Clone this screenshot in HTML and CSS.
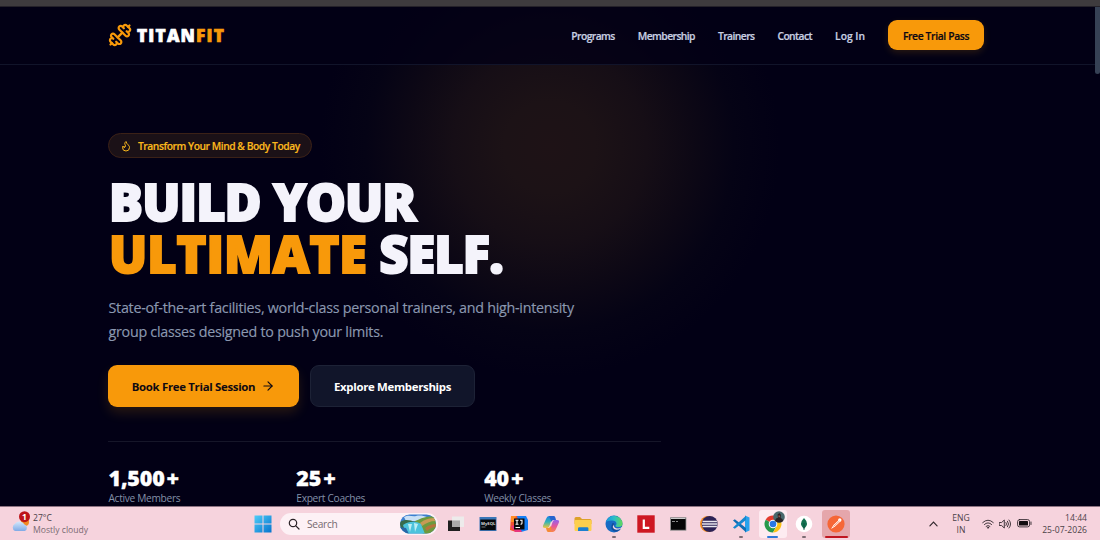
FILE: index.html
```html
<!DOCTYPE html>
<html lang="en">
<head>
    <meta charset="UTF-8">
    <meta name="viewport" content="width=device-width, initial-scale=1.0">
    <title>TitanFit</title>
    <link rel="stylesheet" href="styles.css">
</head>
<body>
    <div class="top-strip"></div>

    <div class="page">
        <div class="glow"></div>
        <div class="scrollbar"></div>

        <header class="header">
            <div class="logo">
                <svg class="logo-icon" viewBox="0 0 24 24">
                    <g transform="rotate(90 12 12)">
                        <path d="M14.4 14.4 9.6 9.6"/>
                        <path d="M18.657 21.485a2 2 0 1 1-2.829-2.828l-1.767 1.768a2 2 0 1 1-2.829-2.829l6.364-6.364a2 2 0 1 1 2.829 2.829l-1.768 1.767a2 2 0 1 1 2.828 2.829z"/>
                        <path d="m21.5 21.5-1.4-1.4"/>
                        <path d="M3.9 3.9 2.5 2.5"/>
                        <path d="M6.404 12.768a2 2 0 1 1-2.829-2.829l1.768-1.767a2 2 0 1 1-2.828-2.829l2.828-2.828a2 2 0 1 1 2.829 2.828l1.767-1.768a2 2 0 1 1 2.829 2.829z"/>
                    </g>
                </svg>
                <span class="logo-text">TITAN<span class="accent">FIT</span></span>
            </div>
            <nav class="nav">
                <a class="nav-link">Programs</a>
                <a class="nav-link">Membership</a>
                <a class="nav-link">Trainers</a>
                <a class="nav-link">Contact</a>
                <a class="nav-link nav-login">Log In</a>
                <a class="btn-pass">Free Trial Pass</a>
            </nav>
        </header>

        <main class="hero">
            <div class="badge">
                <svg class="badge-icon" viewBox="0 0 24 24">
                    <path d="M8.5 14.5A2.5 2.5 0 0 0 11 12c0-1.38-.5-2-1-3-1.072-2.143-.224-4.054 2-6 .5 2.5 2 4.9 4 6.5 2 1.6 3 3.5 3 5.5a7 7 0 1 1-14 0c0-1.153.433-2.294 1-3a2.5 2.5 0 0 0 2.5 2.5z"/>
                </svg>
                <span>Transform Your Mind &amp; Body Today</span>
            </div>

            <h1 class="title">
                <span class="line">BUILD YOUR</span>
                <span class="line"><span class="accent ultimate">ULTIMATE</span> SELF.</span>
            </h1>

            <p class="subtitle">State-of-the-art facilities, world-class personal trainers, and high-intensity<br>group classes designed to push your limits.</p>

            <div class="actions">
                <a class="btn btn-primary">
                    <span>Book Free Trial Session</span>
                    <svg class="arrow" viewBox="0 0 24 24"><path d="M5 12h14"/><path d="m12 5 7 7-7 7"/></svg>
                </a>
                <a class="btn btn-secondary">Explore Memberships</a>
            </div>

            <div class="stats">
                <div class="stat">
                    <div class="stat-value">1,500<span class="plus">+</span></div>
                    <div class="stat-label">Active Members</div>
                </div>
                <div class="stat">
                    <div class="stat-value">25<span class="plus">+</span></div>
                    <div class="stat-label">Expert Coaches</div>
                </div>
                <div class="stat">
                    <div class="stat-value">40<span class="plus">+</span></div>
                    <div class="stat-label">Weekly Classes</div>
                </div>
            </div>
        </main>
    </div>

    <footer class="taskbar">
        <div class="weather">
            <svg class="weather-icon" viewBox="0 0 20 22">
                <defs>
                    <linearGradient id="cloud" x1="0" y1="0" x2="0" y2="1">
                        <stop offset="0" stop-color="#d5e8fb"/>
                        <stop offset="1" stop-color="#7faae6"/>
                    </linearGradient>
                </defs>
                <circle cx="14" cy="11" r="4" fill="#f08a24"/>
                <path d="M4 20a4 4 0 0 1 0-7.200a5.500 5.500 0 0 1 9.500 0.800a3.400 3.400 0 0 1 .3 6.400z" fill="url(#cloud)"/>
                <circle cx="13.500" cy="5.700" r="5.500" fill="#bd1318"/>
                <text x="13.500" y="8.700" class="weather-count">1</text>
            </svg>
            <div class="weather-text">
                <div class="temp">27°C</div>
                <div class="condition">Mostly cloudy</div>
            </div>
        </div>

        <div class="apps">
            <div class="app start">
                <svg viewBox="0 0 18 18">
                    <defs>
                        <linearGradient id="win" x1="0" y1="0" x2="1" y2="1">
                            <stop offset="0" stop-color="#4fcdf8"/>
                            <stop offset="1" stop-color="#0573cd"/>
                        </linearGradient>
                    </defs>
                    <path d="M.5.5h8v8h-8zM9.500.5h8v8h-8zM.5 9.500h8v8h-8zM9.500 9.500h8v8h-8z" fill="url(#win)"/>
                </svg>
            </div>

            <div class="search">
                <svg class="search-icon" viewBox="0 0 12 12"><circle cx="5" cy="5" r="3.700"/><path d="m7.800 7.800 3.200 3.200"/></svg>
                <span class="search-label">Search</span>
                <svg class="search-art" viewBox="0 0 36 20">
                    <defs>
                        <clipPath id="pill"><rect width="36" height="19" y=".5" rx="9.500"/></clipPath>
                    </defs>
                    <g clip-path="url(#pill)">
                        <rect width="36" height="20" fill="#3c7fd0"/>
                        <path d="M4 3c5-3 8 0 12-1s8 0 11 1l-5 4H6z" fill="#c9e0f5"/>
                        <path d="M0 8c5-3 10-2 15 0l-2 5-13 2z" fill="#386b4c"/>
                        <path d="M14 8c6-4 14-6 22-6v18H23z" fill="#6c9a3e"/>
                        <path d="M20 9c5-4 10-5 16-5v3c-6 0-10 2-14 5z" fill="#c79a55"/>
                        <path d="M25 14c4-3 7-4 11-4v3c-4 0-7 2-9 4z" fill="#b5733c"/>
                        <path d="M3 11c6-4 13-4 18-1l4 10H6z" fill="#4cc3dc"/>
                        <path d="M8 10l2 8 2-8zM14 9l1 9 3-8z" fill="#bdeef3"/>
                        <path d="M0 13l6 1 3 6H0z" fill="#2867a7"/>
                    </g>
                </svg>
            </div>

            <div class="app">
                <svg viewBox="0 0 18 18">
                    <rect x="1" y="5.500" width="12" height="10.500" fill="#1f1f1f"/>
                    <rect x="5" y="1.500" width="12" height="10.500" fill="#ececec" opacity=".94"/>
                    <path d="M5 5.500h8V12H5z" fill="#aaa"/>
                </svg>
            </div>
            <div class="app">
                <svg viewBox="0 0 18 18">
                    <rect x=".5" y="2" width="17" height="14" fill="#3b77b8"/>
                    <rect x="1.300" y="4.500" width="15.400" height="10.600" fill="#05080c"/>
                    <text x="2" y="9.700" class="tiny-text">MySQL</text>
                    <path d="M2.500 12h4" stroke="#777"/>
                </svg>
            </div>
            <div class="app">
                <svg viewBox="0 0 18 18">
                    <path d="M1 1h8l2 8-5 8-6-2z" fill="#f3532f"/>
                    <path d="M7 1l9 0 2 4v10l-7 2z" fill="#147ef5"/>
                    <path d="M1 11l7-2 4 8H5z" fill="#e8357d"/>
                    <path d="M1 1h5l-2 6H1z" fill="#ff8d25"/>
                    <rect x="4" y="3.500" width="10.500" height="11" fill="#090909"/>
                    <path d="M5.500 5.300h3M7 5.300v4M5.500 9.300h3M10 5.300h2v3q0 1-1.500 1M5.500 12.500h4.500" fill="none" stroke="#fff" stroke-width="1.100"/>
                </svg>
            </div>
            <div class="app">
                <svg viewBox="0 0 18 18">
                    <defs>
                        <linearGradient id="copilot-a" x1="0" y1="0" x2="0" y2="1">
                            <stop offset="0" stop-color="#1680e3"/>
                            <stop offset=".5" stop-color="#33b4b6"/>
                            <stop offset="1" stop-color="#f3c33b"/>
                        </linearGradient>
                        <linearGradient id="copilot-b" x1="0" y1="0" x2="0" y2="1">
                            <stop offset="0" stop-color="#9161f0"/>
                            <stop offset=".5" stop-color="#e4569c"/>
                            <stop offset="1" stop-color="#fa8848"/>
                        </linearGradient>
                    </defs>
                    <path d="M12 1H7Q5 1 4 4L1.300 10Q0 13 3 13h2.500q1.500 0 2.300-3l1.600-5q.8-2 2.600-1z" fill="url(#copilot-a)"/>
                    <path d="M6 17h5q2 0 3-3l2.700-6Q18 5 15 5h-2.500q-1.500 0-2.300 3l-1.600 5Q7.800 15 6 14z" fill="url(#copilot-b)"/>
                    <path d="M7 1h5q1.200 0 2 4h-2.500q-1.600 0-2 2z" fill="#2763ce"/>
                    <path d="M4 13h2.500q1.500 0 2-2l1.200 2-1.500 4H6q-1.200 0-2-4z" fill="#f58b36"/>
                </svg>
            </div>
            <div class="app">
                <svg viewBox="0 0 18 18">
                    <path d="M.5 3.500q0-1.500 1.500-1.500h4l2 2h8q1.500 0 1.500 1.500V9H.5z" fill="#dda12a"/>
                    <rect x=".5" y="5" width="17" height="11" rx="1.200" fill="#fdcf4c"/>
                    <path d="M4 16v-2.500q0-1.200 1.200-1.200h8q1.200 0 1.200 1.200V16z" fill="#1b7fd0"/>
                </svg>
            </div>
            <div class="app running">
                <svg viewBox="0 0 18 18">
                    <defs>
                        <linearGradient id="edge" x1="0" y1="0" x2="1" y2="0">
                            <stop offset="0" stop-color="#1993dc"/>
                            <stop offset=".5" stop-color="#2bbdc9"/>
                            <stop offset="1" stop-color="#62d957"/>
                        </linearGradient>
                    </defs>
                    <circle cx="9" cy="9" r="8.500" fill="#176bc4"/>
                    <path d="M.6 8A8.500 8.500 0 0 1 17.500 8.500q0 3.500-4 3.500-3 0-3-1.500 1-.7 1-2Q11 5.500 7 5.500.6 5.500.6 8z" fill="url(#edge)"/>
                    <path d="M7.500 8q-3 5 1 8 3 1.500 6.500-1-5 1-6-3-.3-2 .5-3 0-1-2-1z" fill="#124d9b"/>
                    <path d="M8.700 9.500q0 4 4.200 4 2 0 4-1.500l1.100 3H17l-1-1.500q-7 3-8.300-1.500z" fill="#f4d6df"/>
                </svg>
            </div>
            <div class="app">
                <svg viewBox="0 0 18 18">
                    <rect x=".3" y=".3" width="17.400" height="17.400" fill="#ce1722"/>
                    <path d="M6.800 4.500v8.300h5.500" fill="none" stroke="#fff" stroke-width="2.200"/>
                </svg>
            </div>
            <div class="app">
                <svg viewBox="0 0 18 18">
                    <rect x="1.500" y="2.700" width="15.500" height="12.500" fill="#060606" stroke="#999" stroke-width=".8"/>
                    <path d="M2 3.500h14.500" stroke="#ccc"/>
                    <path d="M3 6.500h3M7 6.500h2" stroke="#aaa" stroke-width=".8"/>
                </svg>
            </div>
            <div class="app">
                <svg viewBox="0 0 18 18">
                    <circle cx="8" cy="9" r="8" fill="#f28c20"/>
                    <circle cx="9.700" cy="9" r="8" fill="#2c2255"/>
                    <path d="M2.500 6.500h14.400M2 9h15.400M2.500 11.500h14.400" stroke="#e9e7ee" stroke-width="1.300"/>
                </svg>
            </div>
            <div class="app running">
                <svg viewBox="0 0 18 18">
                    <path d="M13 .5 17.500 2.500v13L13 17.500z" fill="#27a2ec"/>
                    <path d="M1 5.500 2.800 4.300 14 13v4.200z" fill="#0e6db4"/>
                    <path d="M1 12.500 2.800 13.700 14 5V.8z" fill="#1688cf"/>
                </svg>
            </div>
            <div class="app chrome">
                <svg viewBox="0 0 18 18">
                    <path d="M9 9 1.700 4.700A8.500 8.500 0 0 1 16.500 5z" fill="#e33b2e"/>
                    <path d="M9 9 1.700 4.700A8.500 8.500 0 0 0 9 17.500L12.500 11z" fill="#27994b"/>
                    <path d="M9 5h7.500A8.500 8.500 0 0 1 9 17.500L12.800 11z" fill="#fbc116"/>
                    <circle cx="9" cy="9" r="4.300" fill="#fff"/>
                    <circle cx="9" cy="9" r="3.300" fill="#2878e5"/>
                </svg>
                <svg class="avatar" viewBox="0 0 12 12">
                    <circle cx="6" cy="6" r="5.800" fill="#48686c"/>
                    <path d="M2 10q.5-3 3-3.200L4.500 3.500 6.500 2 8 4l-.3 3q2 .5 2.500 3-4 3-8.200 0z" fill="#292326"/>
                    <path d="M5.300 4.500h1.800v1.700H5.500z" fill="#8d594d"/>
                </svg>
            </div>
            <div class="app running">
                <svg viewBox="0 0 18 18">
                    <circle cx="9" cy="9" r="8.300" fill="#fff"/>
                    <path d="M9 3q6 6 0 11Q3 9 9 3z" fill="#137150"/>
                    <path d="M9 8v7" stroke="#0a4c3d" stroke-width=".8"/>
                </svg>
            </div>
            <div class="app postman">
                <svg viewBox="0 0 18 18">
                    <circle cx="9" cy="9" r="8.600" fill="#f66636"/>
                    <path d="M4 14l2.500-4L12 4.800l1.600 1.500L8 11.500z" fill="#fff"/>
                    <circle cx="12.800" cy="5" r="1.700" fill="#fff"/>
                    <path d="m6.500 11.500 6-5.500" stroke="#f66636" stroke-width=".7"/>
                </svg>
            </div>
        </div>

        <div class="tray">
            <svg class="chevron" viewBox="0 0 10 6"><path d="m1 5 4-4 4 4"/></svg>
            <div class="lang">ENG<br>IN</div>
            <svg class="wifi" viewBox="0 0 12 10">
                <path d="M.7 3.600q5.300-5 10.600 0M2.400 5.500q3.600-3.400 7.200 0M4.100 7.300q1.900-1.700 3.800 0"/>
                <circle cx="6" cy="8.700" r=".6"/>
            </svg>
            <svg class="volume" viewBox="0 0 12 10">
                <path d="M.6 3.500h2L5.300 1v8L2.600 6.500h-2zM7 3.500q1.200 1.500 0 3M8.500 2.200q2.300 2.800 0 5.600M10 1q3.300 4 0 8"/>
            </svg>
            <svg class="battery" viewBox="0 0 15 9">
                <rect x=".6" y=".6" width="12" height="7.300" rx="2"/>
                <rect class="charge" x="2" y="2" width="9" height="4.500" rx=".6"/>
                <path d="M14 3v2.500"/>
            </svg>
            <div class="clock">14:44<br><span>25-07-2026</span></div>
        </div>
    </footer>
</body>
</html>
```

FILE: styles.css
```css
* {
    box-sizing: border-box;
}
body {
    margin: 0;
    width: 1100px;
    height: 540px;
    overflow: hidden;
    background: #020015;
    font-family: 'Open Sans', 'Noto Sans', sans-serif;
    color: #f4f3fb;
}
svg {
    display: block;
    flex: none;
}
.accent {
    color: #f8990a;
}
.top-strip {
    height: 7px;
    background: #3e3b3e;
    border-bottom: 1px solid #242129;
}

/* page */
.page {
    position: relative;
    height: 499px;
    overflow: hidden;
}
.glow {
    position: absolute;
    left: 320px;
    top: -90px;
    width: 460px;
    height: 460px;
    background: radial-gradient(closest-side, #1e1216 0%, #1c1216 20%, #160e16 42%, #0d0815 62%, #050315 80%, rgba(2, 0, 21, 0) 100%);
}
.scrollbar {
    position: absolute;
    right: 0;
    top: 0;
    width: 5px;
    height: 67px;
    background: #364155;
    border-radius: 0 0 3px 3px;
}
.header {
    position: relative;
    display: flex;
    justify-content: space-between;
    height: 58px;
    margin-right: 5px;
    padding: 0 111px 1px 108px;
    align-items: center;
    background: rgba(2, 0, 21, 0.8);
    border-bottom: 1px solid #11142a;
}
.logo {
    display: flex;
    align-items: center;
    gap: 5px;
}
.logo-icon {
    width: 24px;
    height: 24px;
    fill: none;
    stroke: #f8990a;
    stroke-width: 2.2;
    stroke-linecap: round;
    stroke-linejoin: round;
}
.logo-text {
    padding-top: 2px;
    font-size: 17.2px;
    font-weight: 800;
    line-height: 24px;
    letter-spacing: 1.2px;
    -webkit-text-stroke: 0.7px;
    color: #fff;
}
.nav {
    display: flex;
    align-items: center;
    gap: 23px;
    font-size: 10.3px;
    font-weight: 600;
    letter-spacing: -0.57px;
    -webkit-text-stroke: 0.2px;
    color: #c9d0e2;
    white-space: nowrap;
}
.nav-link {
    padding-top: 2px;
}
.nav-login {
    letter-spacing: 0;
}
.btn-pass {
    width: 96px;
    height: 30px;
    line-height: 32px;
    text-align: center;
    border-radius: 9px;
    background: #f8990a;
    color: #0c0813;
    letter-spacing: -0.35px;
    box-shadow: 0 3px 7px rgba(248, 153, 10, 0.15);
}

/* hero */
.hero {
    position: relative;
    width: 553px;
    margin-left: 108px;
    padding-top: 68px;
}
.badge {
    display: flex;
    align-items: center;
    gap: 6px;
    width: 204px;
    height: 25px;
    padding-left: 11px;
    border: 1px solid #3b2117;
    border-radius: 13px;
    background: #1b1117;
    color: #fbb91d;
    font-size: 10.3px;
    font-weight: 600;
    letter-spacing: -0.47px;
    -webkit-text-stroke: 0.15px;
    white-space: nowrap;
}
.badge-icon {
    width: 12px;
    height: 12px;
    fill: none;
    stroke: #fbb91d;
    stroke-width: 2;
    stroke-linecap: round;
    stroke-linejoin: round;
}
.title {
    margin: 18px 0 0;
    padding-left: 1px;
    font-size: 50.5px;
    font-weight: 800;
    line-height: 52px;
    letter-spacing: -0.9px;
    -webkit-text-stroke: 2px;
}
.line {
    display: block;
    white-space: nowrap;
}
.ultimate {
    letter-spacing: 0;
}
.subtitle {
    margin: 16px 0 0;
    padding-left: 0.5px;
    font-size: 14.3px;
    line-height: 23.5px;
    color: #8b98b0;
    letter-spacing: -0.27px;
    -webkit-text-stroke: 0.15px;
    white-space: nowrap;
}
.actions {
    display: flex;
    gap: 11px;
    margin-top: 22px;
}
.btn {
    display: flex;
    align-items: center;
    justify-content: center;
    height: 42px;
    border-radius: 9px;
    font-size: 11.4px;
    font-weight: 700;
    white-space: nowrap;
}
.btn-primary {
    width: 191px;
    gap: 6px;
    background: #f8990a;
    color: #100a12;
    letter-spacing: -0.3px;
    box-shadow: 0 6px 12px rgba(248, 153, 10, 0.15);
}
.arrow {
    width: 14px;
    height: 14px;
    fill: none;
    stroke: #100a12;
    stroke-width: 2;
    stroke-linecap: round;
    stroke-linejoin: round;
}
.btn-secondary {
    width: 165px;
    background: #11152a;
    border: 1px solid #1d2236;
    color: #fff;
    letter-spacing: -0.3px;
}
.stats {
    display: grid;
    grid-template-columns: repeat(3, 1fr);
    column-gap: 11px;
    margin-top: 34px;
    padding-top: 23px;
    padding-left: 0.5px;
    border-top: 1px solid #161629;
}
.stat-value {
    font-size: 21.5px;
    font-weight: 800;
    line-height: 26px;
    letter-spacing: -0.2px;
    -webkit-text-stroke: 0.3px;
    color: #fff;
}
.plus {
    margin-left: 2px;
}
.stat-label {
    font-size: 10.2px;
    line-height: 14px;
    letter-spacing: -0.32px;
    color: #8290a8;
    white-space: nowrap;
}

/* taskbar */
.taskbar {
    display: flex;
    align-items: center;
    height: 34px;
    background: #f6d3dd;
    border-top: 1px solid #8c7281;
    color: #4c4248;
    font-size: 8.6px;
    white-space: nowrap;
}
.weather {
    display: flex;
    align-items: center;
    gap: 2px;
    width: 249px;
    padding-left: 11px;
}
.weather-icon {
    width: 20px;
    height: 22px;
    margin-top: -3px;
}
.weather-count {
    font-size: 8.5px;
    font-weight: 700;
    text-anchor: middle;
    fill: #fff;
}
.weather-text {
    line-height: 12px;
}
.condition {
    color: #796a72;
}
.apps {
    display: flex;
    align-items: center;
    width: 603px;
}
.app {
    position: relative;
    display: flex;
    align-items: center;
    justify-content: center;
    width: 31.7px;
    height: 28px;
    flex: none;
}
.app svg {
    width: 18px;
    height: 18px;
}
.start {
    width: 28px;
}
.search {
    display: flex;
    align-items: center;
    width: 158px;
    height: 22px;
    margin: 0 2px 0 3px;
    padding: 0 2px 0 8px;
    flex: none;
    border-radius: 11px;
    background: #fdf1f5;
}
.search-icon {
    width: 12px;
    height: 12px;
    fill: none;
    stroke: #2a2226;
    stroke-width: 1.2;
    stroke-linecap: round;
}
.search-label {
    margin-left: 7px;
    font-size: 10.2px;
    letter-spacing: -0.3px;
    color: #75696f;
}
.search-art {
    width: 36px;
    height: 20px;
    margin-left: auto;
}
.tiny-text {
    font-size: 4.2px;
    font-weight: 700;
    fill: #ddd;
}
.running::after {
    content: "";
    position: absolute;
    bottom: 0;
    width: 4px;
    height: 2px;
    border-radius: 1px;
    background: #7d6c73;
}
.chrome::before,
.postman::before {
    content: "";
    position: absolute;
    inset: 0 2px;
    border-radius: 3px;
    background: #fdebf1;
}
.postman::before {
    background: #e5a6ab;
}
.chrome svg,
.postman svg {
    position: relative;
}
.chrome::after,
.postman::after {
    content: "";
    position: absolute;
    bottom: 0;
    width: 11px;
    height: 2px;
    border-radius: 1px;
    background: #2e78d8;
}
.postman::after {
    width: 23px;
    background: #c01520;
}
.chrome .avatar {
    position: absolute;
    left: 16px;
    top: 1px;
    width: 12px;
    height: 12px;
}
.tray {
    display: flex;
    align-items: center;
    width: 236px;
    margin-left: auto;
    line-height: 12px;
}
.tray svg {
    fill: none;
    stroke: #30272c;
    stroke-width: 0.9;
    stroke-linecap: round;
}
.tray .chevron {
    width: 9px;
    height: 6px;
    margin-left: 65px;
    stroke-width: 1.3;
}
.lang {
    width: 22px;
    margin-left: 12px;
    text-align: center;
}
.wifi {
    width: 12px;
    height: 10px;
    margin-left: 10px;
}
.volume {
    width: 12px;
    height: 10px;
    margin-left: 5px;
}
.battery {
    width: 15px;
    height: 9px;
    margin-left: 6px;
}
.tray .charge {
    fill: #120d10;
    stroke: none;
}
.clock {
    margin-left: auto;
    margin-right: 13px;
    text-align: right;
}
```
